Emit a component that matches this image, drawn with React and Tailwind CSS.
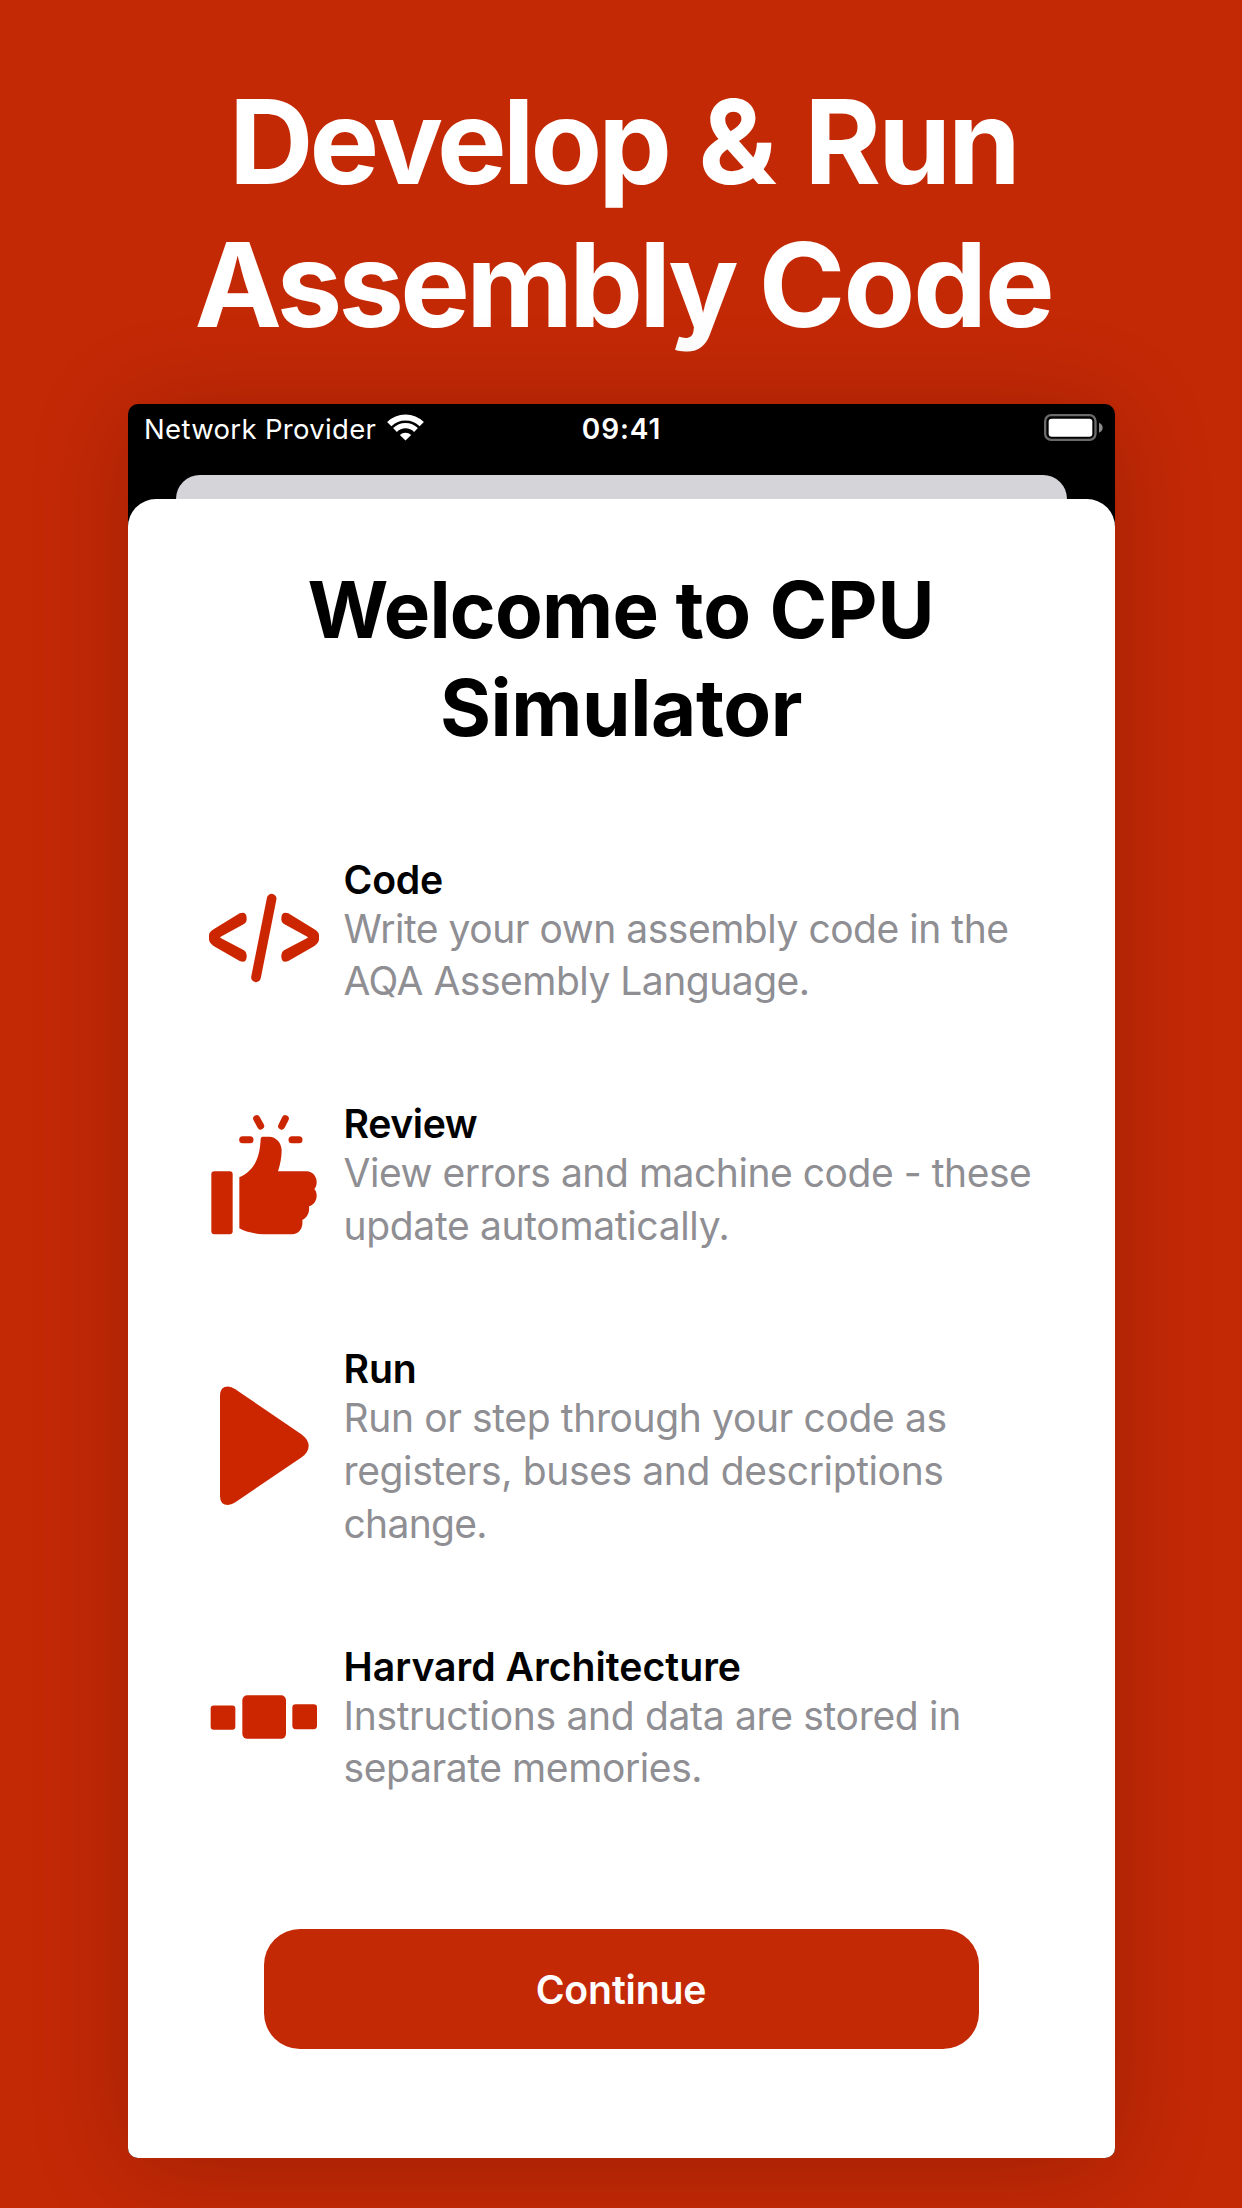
function CodeIcon() {
  return (
    <svg className="h-[130px] w-[116px] shrink-0" viewBox="48 54 348 390" fill="#cc2600">
      <path d="M149 190 Q170 183 170 205 V209 Q170 217 162 222 L92 260 Q89 262 92 264 L162 301 Q170 306 170 315 V320 Q169 341 149 333 L72 289 Q57 279 57 268 V256 Q57 245 72 237 Z" />
      <path transform="translate(444 0) scale(-1 1)" d="M149 190 Q170 183 170 205 V209 Q170 217 162 222 L92 260 Q89 262 92 264 L162 301 Q170 306 170 315 V320 Q169 341 149 333 L72 289 Q57 279 57 268 V256 Q57 245 72 237 Z" />
      <path d="M245 146 L198 382" stroke="#cc2600" strokeWidth="29" strokeLinecap="round" />
    </svg>
  );
}

function ThumbIcon() {
  return (
    <svg className="h-[130px] w-[116px] shrink-0" viewBox="48 38 348 390" fill="#cc2600">
      <rect x="64" y="213" width="64" height="189" rx="9" />
      <path d="M148 231 C190 213 210 175 212 115 Q213 109 218 109 H237 C258 109 275 128 275 150 C275 172 270 195 264 213 H350 C368 214 380 228 380 245 C380 254 378 260 373 266 C378 272 380 279 380 285 C380 302 371 314 357 318 C359 334 354 350 337 359 C340 382 328 402 306 402 H220 C190 400 165 394 148 384 Z" />
      <g stroke="#cc2600" strokeWidth="21" strokeLinecap="round">
        <path d="M158 118 H180" />
        <path d="M306 118 H327" />
        <path d="M200 55 L212 77" />
        <path d="M286 55 L275 77" />
      </g>
    </svg>
  );
}

function PlayIcon() {
  return (
    <svg className="h-[130px] w-[116px] shrink-0" viewBox="48 101.3 348 390" fill="#cc2600">
      <path d="M90 137 Q90 109 114 109 Q124 109 136 117 L334 252 Q356 268 356 287 Q356 306 334 322 L136 456 Q124 464 114 464 Q90 464 90 437 Z" />
    </svg>
  );
}

function BlocksIcon() {
  return (
    <svg className="h-[130px] w-[116px] shrink-0" viewBox="48 74.4 348 390" fill="#cc2600">
      <rect x="62" y="226" width="74" height="73" rx="9" />
      <rect x="157" y="195" width="131" height="131" rx="15" />
      <rect x="307" y="222" width="74" height="75" rx="10" />
    </svg>
  );
}

function WifiIcon() {
  return (
    <svg className="h-[27px] w-[37px]" viewBox="800.5 55.5 111 81" fill="none" stroke="#fff">
      <path d="M807.2 86.2 A69 69 0 0 1 904.8 86.2" strokeWidth="18" />
      <path d="M824.5 103.5 A44.5 44.5 0 0 1 887.5 103.5" strokeWidth="16" />
      <path d="M856 135 L839 118.5 A24 24 0 0 1 873 118.5 Z" fill="#fff" stroke="none" />
    </svg>
  );
}

function BatteryIcon() {
  return (
    <svg className="h-[27px] w-[59px]" viewBox="1272 57 177 81">
      <rect x="1275.5" y="60.5" width="151" height="74" rx="18" fill="none" stroke="#6b6b6b" strokeWidth="7" />
      <rect x="1286" y="71" width="131" height="54" rx="9" fill="#fff" />
      <path d="M1437 83 Q1448 88 1448 98 Q1448 108 1437 113 Z" fill="#8a8a8a" />
    </svg>
  );
}

const features = [
  {
    Icon: CodeIcon,
    title: "Code",
    titleClass: "tracking-[-0.2px]",
    lines: [
      ["Write your own assembly code in the", "tracking-[-0.47px]"],
      ["AQA Assembly Language.", "tracking-[-0.5px]"],
    ],
  },
  {
    Icon: ThumbIcon,
    title: "Review",
    titleClass: "tracking-[-0.4px]",
    lines: [
      ["View errors and machine code - these", "tracking-[-0.46px]"],
      ["update automatically.", "tracking-[-0.33px]"],
    ],
  },
  {
    Icon: PlayIcon,
    title: "Run",
    titleClass: "tracking-[-0.1px]",
    lines: [
      ["Run or step through your code as", "tracking-[-0.37px]"],
      ["registers, buses and descriptions", "tracking-[-0.37px]"],
      ["change.", "tracking-[-0.7px]"],
    ],
  },
  {
    Icon: BlocksIcon,
    title: "Harvard Architecture",
    titleClass: "tracking-[0px]",
    lines: [
      ["Instructions and data are stored in", "tracking-[-0.32px]"],
      ["separate memories.", "tracking-[-0.4px]"],
    ],
  },
];

export default function App() {
  return (
    <main className="flex h-[2208px] w-[1242px] flex-col items-center overflow-hidden bg-[#c42906] pt-[70px] font-['Inter',sans-serif]">
      <h1 className="pl-[5px] text-center text-[117px] leading-[143px] font-bold whitespace-nowrap text-white">
        <span className="block tracking-[-1.48px] [word-spacing:-6px]">
          <span className="tracking-[-4px]">Develop</span> <span className="ml-[10px]">&amp;</span>{" "}
          <span className="ml-[8.7px] tracking-[-2.9px]">Run</span>
        </span>
        <span className="block tracking-[-2.95px] [word-spacing:-6px]">
          <span className="tracking-[-3.75px]">Assembly</span> <span className="ml-[5px] tracking-[-2px]">Code</span>
        </span>
      </h1>

      <section className="mt-[48px] flex h-[1754px] w-[987px] shrink-0 flex-col overflow-hidden rounded-[10px] bg-black shadow-[0_8px_100px_rgba(0,0,0,0.2)]">
        <header className="flex h-[71px] items-start pr-[12px] pl-[16px] text-[27.5px] leading-[34px] text-white">
          <div className="flex flex-1 items-start">
            <span className="w-[243.5px] pt-[8px] pl-[0.5px] tracking-[0.33px] whitespace-nowrap">Network Provider</span>
            <div className="pt-[10px]">
              <WifiIcon />
            </div>
          </div>
          <span className="mr-[3px] pt-[7.5px] text-[28px] font-semibold tracking-[0.9px]">09:41</span>
          <div className="flex flex-1 justify-end pt-[10px]">
            <BatteryIcon />
          </div>
        </header>
        <div className="mx-[48px] h-[24px] rounded-t-[24px] bg-[#d5d4d9]" />

        <div className="flex flex-1 flex-col items-center rounded-t-[28px] bg-white pt-[61.6px]">
          <h2 className="text-center text-[78px] leading-[98px] font-bold whitespace-nowrap text-black">
            <span className="block tracking-[-0.05px] [word-spacing:-3px]">
              <span className="tracking-[-0.75px]">Welcome</span> <span className="ml-[2px]">to</span>{" "}
              <span className="ml-[2.9px]">CPU</span>
            </span>
            <span className="block tracking-[-0.4px]">Simulator</span>
          </h2>

          <ul className="mt-[101.2px] flex w-full flex-col gap-[94.3px] pl-[78px]">
            {features.map(({ Icon, title, titleClass, lines }) => (
              <li key={title} className="flex items-center gap-[22px]">
                <Icon />
                <div className="whitespace-nowrap">
                  <h3 className={`pb-px text-[39.2px] leading-[44px] font-semibold text-black ${titleClass}`}>{title}</h3>
                  <p className="text-[39px] leading-[52.7px] text-[#8e8e93]">
                    {lines.map(([text, cls]) => (
                      <span key={text} className={`block ${cls}`}>
                        {text}
                      </span>
                    ))}
                  </p>
                </div>
              </li>
            ))}
          </ul>

          <button className="mt-[134px] h-[119.5px] w-[715px] rounded-[36px] bg-[#c42906] pt-[3px] text-[39.2px] font-semibold tracking-[-0.15px] text-white">
            Continue
          </button>
        </div>
      </section>
    </main>
  );
}
